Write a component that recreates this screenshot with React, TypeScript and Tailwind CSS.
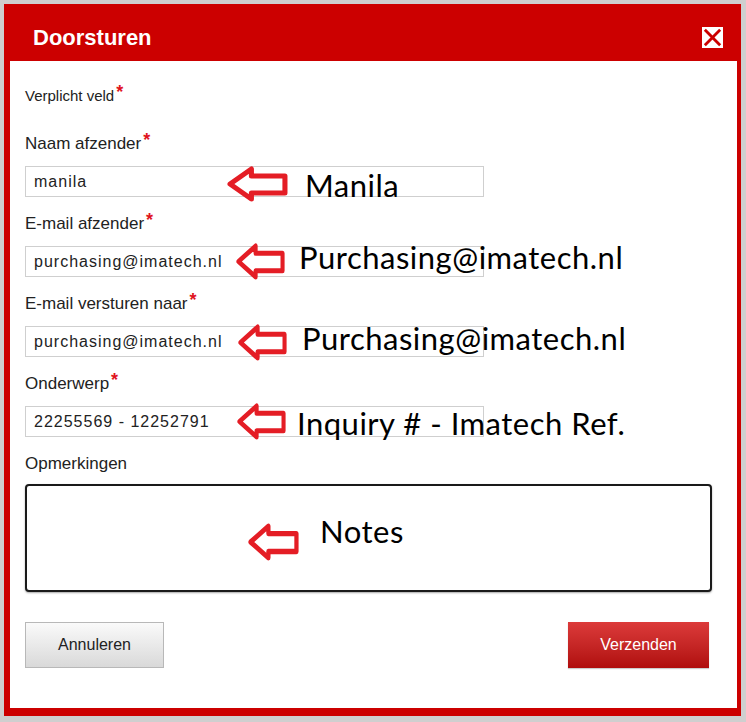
import { ReactNode } from "react";

const formFont = { fontFamily: '"Liberation Sans", Arial, sans-serif' };
const noteFont = { fontFamily: 'Lato, "Open Sans", sans-serif' };

function Req() {
  return <span className="relative -top-[3px] ml-[2px] text-[18px] font-bold text-[#e0141e]">*</span>;
}

function Field({ label, value, required = true }: { label: string; value: string; required?: boolean }) {
  return (
    <div className="flex flex-col">
      <div className="h-[20px] text-[17px] leading-[20px] text-[#222]">
        {label}
        {required ? <Req /> : null}
      </div>
      <div className="mt-[13px] flex h-[31px] w-[459px] items-center border border-[#cfcfcf] bg-white pl-[8px] text-[16px] tracking-[1px] text-[#222]">
        {value}
      </div>
    </div>
  );
}

function Arrow({ className }: { className: string }) {
  return (
    <svg viewBox="0 0 60 36" preserveAspectRatio="none" className={`absolute ${className}`}>
      <polygon
        points="3,18 24,3 24,10 57,10 57,27 24,27 24,33"
        fill="white"
        stroke="#e41d25"
        strokeWidth="5"
        strokeLinejoin="round"
      />
    </svg>
  );
}

function Note({ className, children }: { className: string; children: ReactNode }) {
  return (
    <div
      className={`absolute whitespace-nowrap text-[31px] leading-[31px] tracking-[0.5px] text-black ${className}`}
      style={noteFont}
    >
      {children}
    </div>
  );
}

export default function App() {
  return (
    <div className="relative h-[722px] w-[746px] bg-[#cfcfcf] pl-[4px] pt-[4px]" style={formFont}>
      <div className="flex h-[712px] w-[737px] flex-col bg-[#cc0000] pb-[8px] pl-[6px] pr-[4px]">
        <div className="flex h-[57px] items-center justify-between pl-[23px] pr-[14px] pt-[10px]">
          <h1 className="text-[22px] font-bold text-white">Doorsturen</h1>
          <div className="flex h-[21px] w-[21px] items-center justify-center border border-white bg-white">
            <svg viewBox="0 0 20 20" className="h-[19px] w-[19px]">
              <path d="M3 3 L17 17 M17 3 L3 17" stroke="#cc0000" strokeWidth="3" strokeLinecap="square" />
            </svg>
          </div>
        </div>

        <div className="flex flex-1 flex-col bg-white pl-[15px] pr-[24px] pt-[25px]">
          <div className="h-[18px] text-[15px] leading-[18px] text-[#222]">
            Verplicht veld
            <Req />
          </div>

          <div className="mt-[29px] flex flex-col gap-[16px]">
            <Field label="Naam afzender" value="manila" />
            <Field label="E-mail afzender" value="purchasing@imatech.nl" />
            <Field label="E-mail versturen naar" value="purchasing@imatech.nl" />
            <Field label="Onderwerp" value="22255569 - 12252791" />
          </div>

          <div className="mt-[17px] h-[20px] text-[17px] leading-[20px] text-[#222]">Opmerkingen</div>
          <div className="mt-[10px] h-[108px] w-[687px] rounded-[4px] border-2 border-[#1a1a1a] bg-white shadow-[0_1px_2px_rgba(0,0,0,0.35)]" />

          <div className="mt-[30px] flex items-center justify-between pr-[4px]">
            <button className="h-[46px] w-[139px] border border-[#b8b8b8] bg-gradient-to-b from-[#fafafa] to-[#d9d9d9] text-[16px] text-[#222]">
              Annuleren
            </button>
            <button className="h-[46px] w-[141px] bg-gradient-to-b from-[#dc3a3a] to-[#b00c0c] text-[16px] text-white shadow-[0_1px_1px_rgba(0,0,0,0.2)]">
              Verzenden
            </button>
          </div>
        </div>
      </div>

      <Arrow className="left-[227px] top-[166px] h-[36px] w-[61px]" />
      <Note className="left-[305px] top-[170px]">Manila</Note>

      <Arrow className="left-[236px] top-[243px] h-[37px] w-[49px]" />
      <Note className="left-[299px] top-[242px]">Purchasing@imatech.nl</Note>

      <Arrow className="left-[238px] top-[324px] h-[37px] w-[49px]" />
      <Note className="left-[302px] top-[323px]">Purchasing@imatech.nl</Note>

      <Arrow className="left-[237px] top-[403px] h-[37px] w-[49px]" />
      <Note className="left-[297px] top-[408px]">Inquiry # - Imatech Ref.</Note>

      <Arrow className="left-[248px] top-[523px] h-[38px] w-[51px]" />
      <Note className="left-[320px] top-[516px]">Notes</Note>
    </div>
  );
}
